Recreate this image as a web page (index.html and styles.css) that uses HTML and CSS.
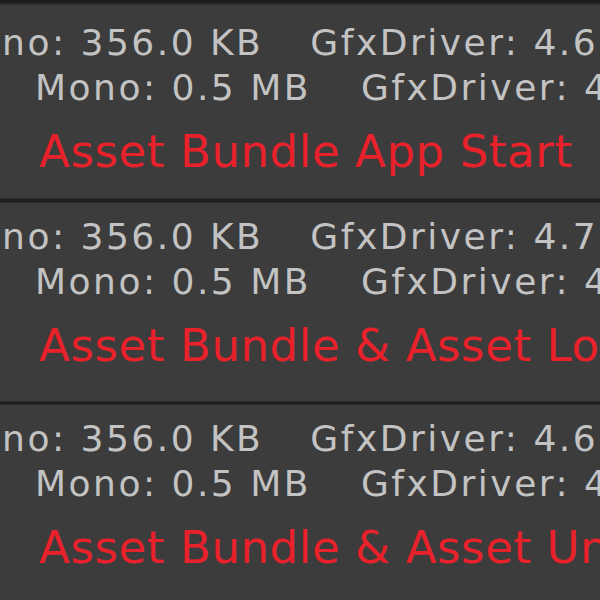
FILE: index.html
```html
<!DOCTYPE html>
<html>
<head>
<meta charset="utf-8">
<link rel="stylesheet" href="styles.css">
</head>
<body>
<div class="view">
  <div class="topband"></div>
  <section class="panel first">
    <div class="line used"><span>Mono: 356.0 KB</span><span>GfxDriver: 4.6 MB</span></div>
    <div class="line reserved"><span>Mono: 0.5 MB</span><span>GfxDriver: 4.0 MB</span></div>
    <div class="title">Asset Bundle App Start</div>
  </section>
  <div class="sep"></div>
  <section class="panel">
    <div class="line used"><span>Mono: 356.0 KB</span><span>GfxDriver: 4.7 MB</span></div>
    <div class="line reserved"><span>Mono: 0.5 MB</span><span>GfxDriver: 4.0 MB</span></div>
    <div class="title">Asset Bundle &amp; Asset Load</div>
  </section>
  <div class="sep thin"></div>
  <section class="panel">
    <div class="line used"><span>Mono: 356.0 KB</span><span>GfxDriver: 4.6 MB</span></div>
    <div class="line reserved"><span>Mono: 0.5 MB</span><span>GfxDriver: 4.0 MB</span></div>
    <div class="title">Asset Bundle &amp; Asset Unload</div>
  </section>
</div>
</body>
</html>
```

FILE: styles.css
```css
html, body {
  margin: 0;
  padding: 0;
  background: #3c3c3c;
}

.view {
  width: 600px;
  height: 600px;
  overflow: hidden;
  display: flex;
  flex-direction: column;
  font-family: "DejaVu Sans", Verdana, sans-serif;
  white-space: nowrap;
}

.topband {
  height: 5px;
  flex: none;
  background: linear-gradient(#1c1c1c 0, #1f1f1f 55%, #343434 100%);
}

.panel {
  flex: none;
  height: 198px;
  box-sizing: border-box;
  padding-top: 11px;
  background: #3c3c3c;
  overflow: hidden;
}

.panel.first {
  height: 193px;
  padding-top: 15px;
}

.sep {
  flex: none;
  height: 5px;
  background: linear-gradient(#2e2e2e 0, #1f1f1f 30%, #1f1f1f 70%, #2e2e2e 100%);
}

.sep.thin {
  height: 4px;
}

.line {
  display: flex;
  gap: 47px;
  font-size: 36px;
  line-height: 45px;
  letter-spacing: 2.5px;
  color: #c3c3c3;
}

.line.used {
  margin-left: -56px;
}

.line.reserved {
  margin-left: 35px;
  gap: 50px;
}

.title {
  margin-top: 12px;
  margin-left: 39px;
  font-size: 45px;
  line-height: 60px;
  letter-spacing: 0.6px;
  color: #e8212b;
}
```
